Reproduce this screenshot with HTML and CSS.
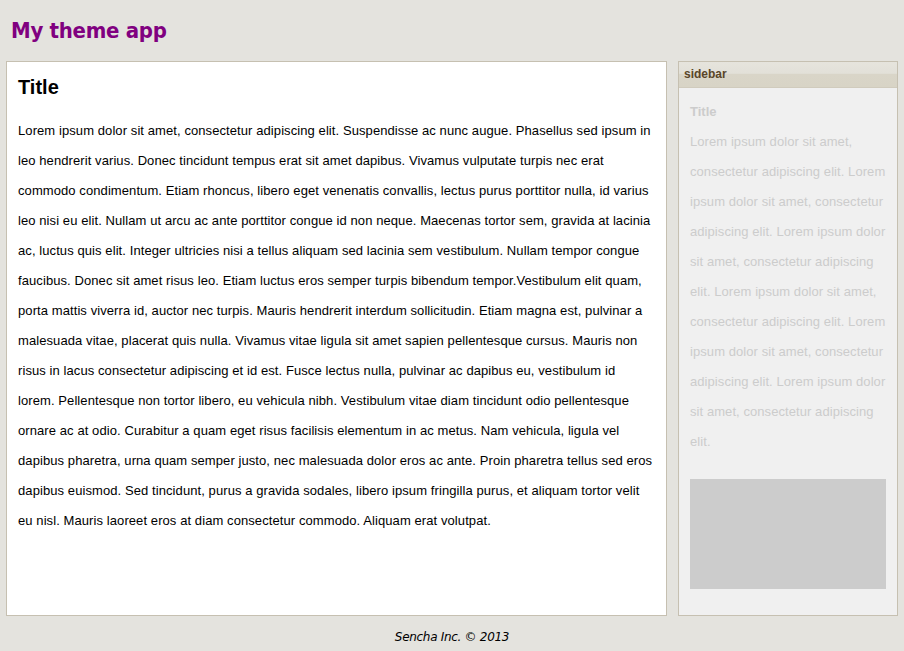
FILE: index.html
```html
<!DOCTYPE html>
<html>
<head>
<meta charset="utf-8">
<link rel="stylesheet" href="styles.css">
</head>
<body>
<header class="app-header"><h1>My theme app</h1></header>
<div class="main-row">
  <section class="main-panel">
    <h2>Title</h2>
    <p>Lorem ipsum dolor sit amet, consectetur adipiscing elit. Suspendisse ac nunc augue. Phasellus sed ipsum in leo hendrerit varius. Donec tincidunt tempus erat sit amet dapibus. Vivamus vulputate turpis nec erat commodo condimentum. Etiam rhoncus, libero eget venenatis convallis, lectus purus porttitor nulla, id varius leo nisi eu elit. Nullam ut arcu ac ante porttitor congue id non neque. Maecenas tortor sem, gravida at lacinia ac, luctus quis elit. Integer ultricies nisi a tellus aliquam sed lacinia sem vestibulum. Nullam tempor congue faucibus. Donec sit amet risus leo. Etiam luctus eros semper turpis bibendum tempor.Vestibulum elit quam, porta mattis viverra id, auctor nec turpis. Mauris hendrerit interdum sollicitudin. Etiam magna est, pulvinar a malesuada vitae, placerat quis nulla. Vivamus vitae ligula sit amet sapien pellentesque cursus. Mauris non risus in lacus consectetur adipiscing et id est. Fusce lectus nulla, pulvinar ac dapibus eu, vestibulum id lorem. Pellentesque non tortor libero, eu vehicula nibh. Vestibulum vitae diam tincidunt odio pellentesque ornare ac at odio. Curabitur a quam eget risus facilisis elementum in ac metus. Nam vehicula, ligula vel dapibus pharetra, urna quam semper justo, nec malesuada dolor eros ac ante. Proin pharetra tellus sed eros dapibus euismod. Sed tincidunt, purus a gravida sodales, libero ipsum fringilla purus, et aliquam tortor velit eu nisl. Mauris laoreet eros at diam consectetur commodo. Aliquam erat volutpat.</p>
  </section>
  <aside class="side-panel">
    <div class="side-header">sidebar</div>
    <div class="side-body">
      <h3>Title</h3>
      <p>Lorem ipsum dolor sit amet, consectetur adipiscing elit. Lorem ipsum dolor sit amet, consectetur adipiscing elit. Lorem ipsum dolor sit amet, consectetur adipiscing elit. Lorem ipsum dolor sit amet, consectetur adipiscing elit. Lorem ipsum dolor sit amet, consectetur adipiscing elit. Lorem ipsum dolor sit amet, consectetur adipiscing elit.</p>
      <div class="side-box"></div>
    </div>
  </aside>
</div>
<footer class="app-footer">Sencha Inc. © 2013</footer>
</body>
</html>
```
FILE: styles.css
```css
html, body {
  margin: 0;
  padding: 0;
  background: #e4e3de;
  width: 904px;
  height: 651px;
  overflow: hidden;
  font-family: "Liberation Sans", Arial, sans-serif;
}
.app-header {
  height: 61px;
  box-sizing: border-box;
  padding: 16px 0 0 11px;
}
.app-header h1 {
  margin: 0;
  font-family: "DejaVu Sans Condensed", "DejaVu Sans", Verdana, sans-serif;
  font-weight: bold;
  font-size: 22px;
  letter-spacing: -0.3px;
  color: #800080;
  line-height: 30px;
}
.main-row {
  display: flex;
  padding: 0 6px 0 6px;
  gap: 11px;
  height: 555px;
}
.main-panel {
  width: 661px;
  flex: none;
  box-sizing: border-box;
  background: #fff;
  border: 1px solid #c6c0b1;
  padding: 13px 11px 0 11px;
}
.main-panel h2 {
  margin: 0;
  font-size: 20px;
  font-weight: bold;
  line-height: 24px;
  color: #000;
}
.main-panel p {
  margin: 17px 0 0 0;
  font-size: 13px;
  letter-spacing: 0.085px;
  line-height: 30px;
  color: #000;
}
.side-panel {
  width: 220px;
  flex: none;
  box-sizing: border-box;
  border: 1px solid #c6c0b1;
  background: #f0f0f0;
  display: flex;
  flex-direction: column;
}
.side-header {
  height: 26px;
  box-sizing: border-box;
  border-bottom: 1px solid #d0cbbd;
  background: linear-gradient(to bottom, #e6e4dd 0%, #e2e0d8 45%, #d9d5c8 50%, #d8d4c6 100%);
  font-size: 12px;
  font-weight: bold;
  color: #5a4629;
  padding: 5px 0 0 5px;
  line-height: 14px;
}
.side-body {
  padding: 9px 11px 0 11px;
}
.side-body h3 {
  margin: 0;
  font-size: 13px;
  font-weight: bold;
  color: #cccccc;
  line-height: 30px;
}
.side-body p {
  margin: 0;
  font-size: 13px;
  letter-spacing: 0.07px;
  line-height: 30px;
  color: #cccccc;
}
.side-box {
  margin-top: 22px;
  height: 110px;
  background: #cccccc;
}
.app-footer {
  text-align: center;
  font-family: "DejaVu Sans", Tahoma, sans-serif;
  font-style: italic;
  font-size: 12px;
  letter-spacing: -0.3px;
  color: #000;
  padding-top: 14px;
}
```
